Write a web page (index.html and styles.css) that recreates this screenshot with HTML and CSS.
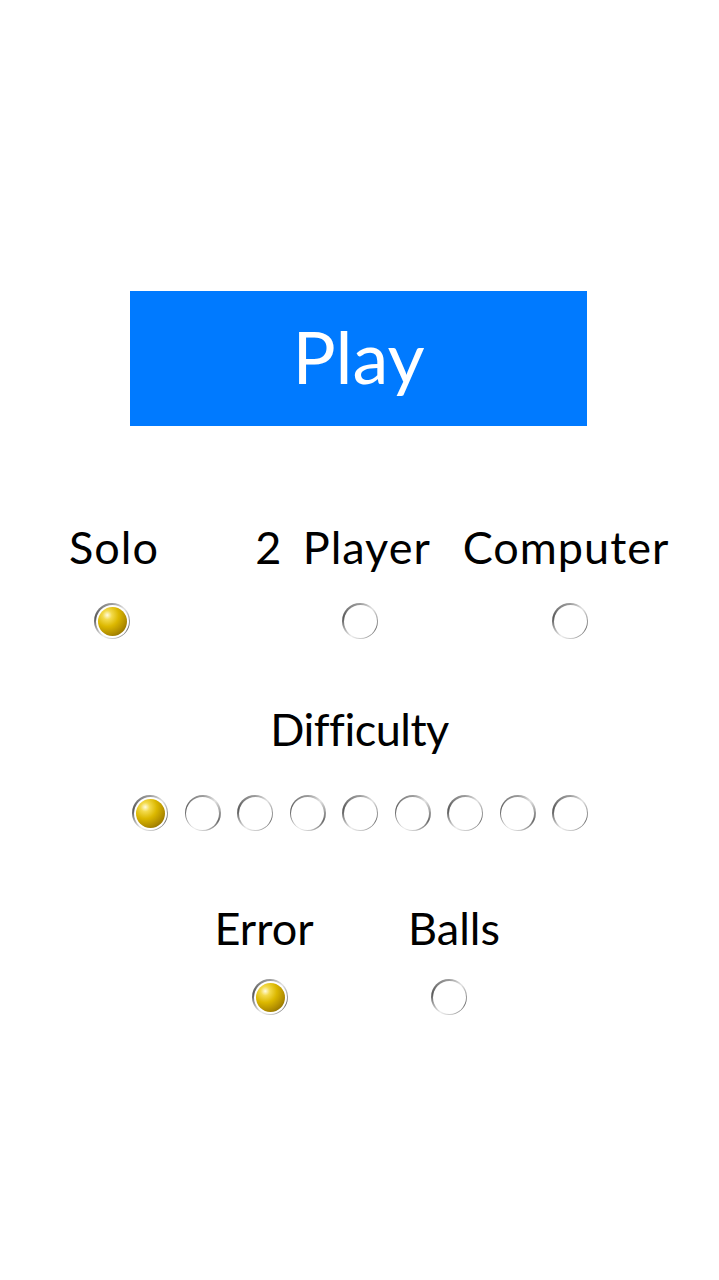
FILE: index.html
```html
<!DOCTYPE html>
<html>
<head>
<meta charset="utf-8">
<link rel="stylesheet" href="styles.css">
</head>
<body>
<div class="page">
  <div class="play-wrap"><button class="play">Play</button></div>

  <div class="labels modes-labels">
    <span>Solo</span><span>2 Player</span><span>Computer</span>
  </div>
  <div class="radios modes-radios">
    <span class="radio on"></span><span class="radio"></span><span class="radio"></span>
  </div>

  <div class="heading">Difficulty</div>
  <div class="diff">
    <span class="radio on"></span><span class="radio"></span><span class="radio"></span><span class="radio"></span><span class="radio"></span><span class="radio"></span><span class="radio"></span><span class="radio"></span><span class="radio"></span>
  </div>

  <div class="labels end-labels">
    <span>Error</span><span>Balls</span>
  </div>
  <div class="radios end-radios">
    <span class="radio on"></span><span class="radio"></span>
  </div>
</div>
</body>
</html>
```

FILE: styles.css
```css
html, body {
  margin: 0;
  padding: 0;
  background: #fff;
}
.page {
  width: 719px;
  height: 1280px;
  font-family: "Lato", "Noto Sans", sans-serif;
  color: #000;
  padding-top: 291px;
  box-sizing: border-box;
}
.play-wrap {
  padding-left: 130px;
}
.play {
  display: block;
  width: 457px;
  height: 135px;
  border: 0;
  margin: 0;
  background: #007aff;
  color: #fff;
  font-family: "Lato", "Noto Sans", sans-serif;
  font-size: 72px;
  font-weight: 400;
  padding: 0 0 6px 0;
}
.labels {
  display: grid;
  font-size: 45px;
  line-height: 50px;
  text-align: center;
  white-space: nowrap;
}
.radios {
  display: grid;
  justify-items: center;
}
.modes-labels {
  margin-top: 96px;
  grid-template-columns: 228px 230px 216px;
  letter-spacing: 1px;
  word-spacing: 8px;
}
.modes-radios {
  margin-top: 31px;
  grid-template-columns: 224px 272px 148px;
}
.heading {
  margin-top: 65px;
  font-size: 45px;
  line-height: 50px;
  text-align: center;
  letter-spacing: -0.5px;
}
.diff {
  display: flex;
  gap: 16.5px;
  padding-left: 132px;
  margin-top: 41px;
}
.end-labels {
  margin-top: 72px;
  padding-left: 164px;
  grid-template-columns: 200px 180px;
}
.end-radios {
  margin-top: 26px;
  padding-left: 170px;
  grid-template-columns: 200px 158px;
}
.radio {
  position: relative;
  display: block;
  width: 36px;
  height: 36px;
  border-radius: 50%;
  background: conic-gradient(#9a9a9a 0deg, #e2e2e2 45deg, #6a6a6a 115deg, #c8c8c8 175deg, #ededed 210deg, #5a5a5a 280deg, #8a8a8a 330deg, #9a9a9a 360deg);
}
.radio::after {
  content: "";
  position: absolute;
  inset: 1.5px;
  border-radius: 50%;
  background: #fff;
}
.radio.on::before {
  content: "";
  position: absolute;
  inset: 1.5px;
  border-radius: 50%;
  background: #fff;
}
.radio.on::after {
  inset: 3.5px;
  background: radial-gradient(circle at 32% 28%, #fffbe0 0%, #f3da4a 16%, #dcb800 40%, #b08c00 68%, #6a5300 100%);
}
```
